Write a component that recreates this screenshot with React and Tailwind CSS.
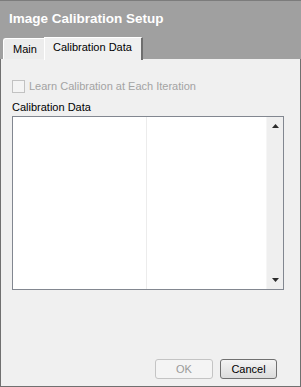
export default function App() {
  return (
    <div className="w-[301px] h-[387px] flex flex-col bg-[#a0a0a0] border-t border-[#7c7c7c] font-['Liberation_Sans',Arial,sans-serif] text-[11px] text-black select-none">
      {/* title */}
      <div className="h-[35px] pl-[9px] pt-[9px] text-[13.5px] font-bold text-white leading-[17px]">
        Image Calibration Setup
      </div>

      {/* tabs */}
      <div className="h-[23px] flex items-end pl-[3px]">
        <div className="w-[41px] h-[21px] bg-[#ececec] border-t border-l border-white rounded-tl-[3px] pl-[9px] pt-[4px] leading-[13px]">
          Main
        </div>
        <div className="w-[99px] h-[23px] -mb-px bg-[#f0f0f0] border-l border-t border-white border-r-2 border-r-[#6e6e6e] pl-[8px] pt-[3px] leading-[13px] relative z-10">
          Calibration Data
        </div>
      </div>

      {/* page */}
      <div className="flex-1 flex flex-col bg-[#f0f0f0] border-l border-r border-b border-[#707070] pl-[11px]">
        <div className="mt-[21px] flex items-center gap-[4px] h-[13px]">
          <div className="w-[13px] h-[13px] border border-[#c2c2c2] bg-[#f4f4f4]" />
          <span className="text-[#a3a3a3] leading-[13px]">Learn Calibration at Each Iteration</span>
        </div>

        <div className="mt-[8px] leading-[13px]">Calibration Data</div>

        <div className="mt-[2px] w-[272px] h-[174px] border border-[#828790] bg-white flex">
          <div className="w-[134px] border-r border-[#ececec]" />
          <div className="flex-1" />
          <div className="w-[17px] bg-[#efefef] border-l border-[#f6f6f6] flex flex-col items-center justify-between py-[7px]">
            <svg width="7" height="4" viewBox="0 0 7 4">
              <path d="M3.5 0 L7 4 L0 4 Z" fill="#2b2b2b" />
            </svg>
            <svg width="7" height="4" viewBox="0 0 7 4">
              <path d="M0 0 L7 0 L3.5 4 Z" fill="#2b2b2b" />
            </svg>
          </div>
        </div>

        <div className="mt-auto mb-[7px] flex justify-end gap-[7px] pr-[23px]">
          <button className="w-[58px] h-[20px] border border-[#c4c4c4] rounded-[3px] bg-[#f4f4f4] text-[#9a9a9a] leading-[18px]">
            OK
          </button>
          <button className="w-[57px] h-[20px] border border-[#707070] rounded-[3px] bg-gradient-to-b from-[#f4f4f4] to-[#dcdcdc] text-black leading-[18px]">
            Cancel
          </button>
        </div>
      </div>
    </div>
  );
}
